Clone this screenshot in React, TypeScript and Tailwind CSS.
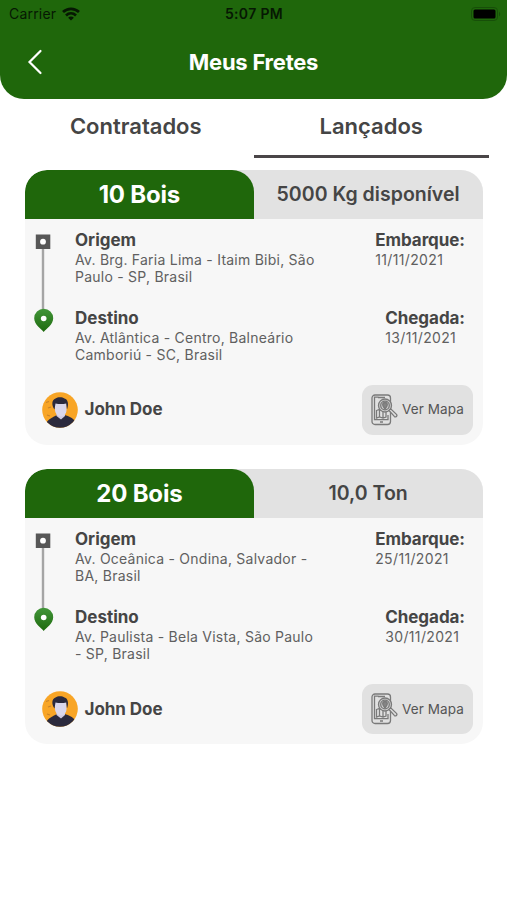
import React, { useState } from 'react';

type Tab = 'contratados' | 'lancados';

interface Freight {
  id: number;
  title: string;
  amount: string;
  origin: string[];
  destination: string[];
  departure: string;
  arrival: string;
  driver: string;
}

const FREIGHTS: Freight[] = [
  {
    id: 1,
    title: '10 Bois',
    amount: '5000 Kg disponível',
    origin: ['Av. Brg. Faria Lima - Itaim Bibi, São', 'Paulo - SP, Brasil'],
    destination: ['Av. Atlântica - Centro, Balneário', 'Camboriú - SC, Brasil'],
    departure: '11/11/2021',
    arrival: '13/11/2021',
    driver: 'John Doe',
  },
  {
    id: 2,
    title: '20 Bois',
    amount: '10,0 Ton',
    origin: ['Av. Oceânica - Ondina, Salvador -', 'BA, Brasil'],
    destination: ['Av. Paulista - Bela Vista, São Paulo', '- SP, Brasil'],
    departure: '25/11/2021',
    arrival: '30/11/2021',
    driver: 'John Doe',
  },
];

const WifiIcon = () => (
  <svg width="18" height="14" viewBox="0 0 18 14" fill="none" stroke="#061803" strokeWidth="2.7">
    <path d="M1 5.1C5.5.8 12.5.8 17 5.1" />
    <path d="M4 8.4c2.9-2.7 7.1-2.7 10 0" />
    <path d="M9 13.6 6.1 10.7c1.6-1.5 4.2-1.5 5.8 0z" fill="#061803" stroke="none" />
  </svg>
);

const BatteryIcon = () => (
  <svg width="30" height="14" viewBox="0 0 30 14">
    <rect x="0.5" y="0.5" width="26" height="13" rx="3.5" fill="none" stroke="#174f09" />
    <rect x="2.5" y="2.5" width="22" height="9" rx="1.5" fill="#000" />
    <path d="M28 4.7c1.6.7 1.6 3.9 0 4.6z" fill="#174f09" />
  </svg>
);

const RouteIcon = () => (
  <svg width="20" height="98" viewBox="0 0 20 98" className="shrink-0">
    <defs>
      <linearGradient id="pin" x1="0" y1="0" x2="0" y2="1">
        <stop offset="0" stopColor="#43963a" />
        <stop offset="1" stopColor="#1d6a0d" />
      </linearGradient>
    </defs>
    <path d="M9 14v64" stroke="#a5a5a5" strokeWidth="2.4" />
    <rect x="1.8" y="0.5" width="14.5" height="14.5" fill="#575757" />
    <circle cx="9" cy="7.7" r="2.9" fill="#fff" />
    <path
      d="M9.700 98C7.500 95 .2 90.800.2 84.200a9.500 9.500 0 0 1 19 0c0 6.600-7.300 10.800-9.500 13.800z"
      fill="url(#pin)"
    />
    <circle cx="9.7" cy="84.5" r="2.8" fill="#fff" />
  </svg>
);

const Avatar = () => (
  <svg width="36" height="36" viewBox="0 0 36 36">
    <clipPath id="face">
      <circle cx="18" cy="18" r="17.8" />
    </clipPath>
    <g clipPath="url(#face)">
      <rect width="36" height="36" fill="#f8a526" />
      <path d="M4 10.500l3-1M6 16l3-1M5 23l3 1" stroke="#c98329" strokeWidth="1.300" />
      <path d="M3 36c0-6 3-8.500 11.500-12.800h9C30 25.500 34 27 35 36z" fill="#2b2a3d" />
      <path d="M14.500 19h8.500v5l-4 3.500-4.500-3.500z" fill="#cfcbe2" />
      <path d="M13 11h11.500v7c0 3.500-2.500 6.500-5.500 6.500s-6-3-6-6.500z" fill="#dad7ec" />
      <path d="M12.500 17.500c-3-4-3-9.500 1-11 2.500-1.800 7-1.500 9 0 3.500.8 4.500 6 2.500 11l-.8-6c-3.200.8-7.200.8-10.700 0z" fill="#2b2a3d" />
    </g>
  </svg>
);

const MapIcon = () => (
  <svg width="27" height="32" viewBox="0 0 27 32" fill="none" stroke="#7a7a7a" strokeWidth="1.300">
    <rect x="1" y="1" width="18.500" height="29.500" rx="3" />
    <path d="M7 3.800V3.200H3.500v22.500H17V21M9 28h3M7 3.500h7" />
    <path d="M5.500 16.500l3-1 3.500 1 3-1v7.500l-3 1-3.500-1-3 1zM8.500 15.500V23M12 16.500V24" />
    <circle cx="14" cy="11.500" r="6.500" fill="#cfcfcf" />
    <circle cx="14" cy="11.500" r="4.300" />
    <path d="M14 15c-1.600-2-2.300-3-2.300-4.200a2.300 2.300 0 0 1 4.600 0C16.300 12 15.600 13 14 15z" fill="#858585" />
    <path d="M18 16.500l1.700-1.600 5.800 5.500c1.200 1.500-.8 3.200-2.200 2z" fill="#ddd" />
  </svg>
);

interface StopProps {
  label: string;
  address: string[];
  dateLabel: string;
  date: string;
}

const Stop: React.FC<StopProps> = ({ label, address, dateLabel, date }) => (
  <div className="flex h-[78px] justify-between">
    <div>
      <h3 className="text-[17px] leading-[21px] font-bold">{label}</h3>
      {address.map((line) => (
        <p key={line} className="text-[14px] leading-[17.600px] tracking-[0.24px] whitespace-nowrap text-[#606060]">{line}</p>
      ))}
    </div>
    <div>
      <h3 className="text-[17px] leading-[21px] font-bold tracking-[-0.05px]">{dateLabel}</h3>
      <p className="text-[14px] leading-[17.600px] tracking-[0.35px] text-[#606060]">{date}</p>
    </div>
  </div>
);

const FreightCard: React.FC<{ freight: Freight }> = ({ freight }) => (
  <article className="h-[275px] overflow-hidden rounded-[22px] bg-[#f7f7f7]">
    <div className="flex h-[49px] bg-[#e2e2e2] text-center">
      <h2 className="w-1/2 rounded-t-[22px] bg-[#1f670b] text-[24px] leading-[49px] font-bold tracking-[-0.2px] text-white">{freight.title}</h2>
      <p className="w-1/2 text-[19.500px] leading-[49px] font-semibold tracking-[0.03px]">{freight.amount}</p>
    </div>

    <div className="flex pt-[11px] pr-[17.500px] pl-[9px]">
      <div className="w-[41px] pt-[4px]">
        <RouteIcon />
      </div>
      <div className="flex-1">
        <Stop label="Origem" address={freight.origin} dateLabel="Embarque:" date={freight.departure} />
        <Stop label="Destino" address={freight.destination} dateLabel="Chegada:" date={freight.arrival} />
      </div>
    </div>

    <div className="flex items-center justify-between pr-[9.500px] pl-[16.500px]">
      <div className="flex items-center gap-[7px]">
        <Avatar />
        <span className="text-[17px] font-bold tracking-[-0.05px]">{freight.driver}</span>
      </div>
      <button className="mt-[-1px] flex h-[50px] w-[111px] items-center gap-[4px] rounded-[11px] bg-[#e1e1e1] pl-[9px]">
        <MapIcon />
        <span className="text-[13.500px] tracking-[0.1px] whitespace-nowrap text-[#555]">Ver Mapa</span>
      </button>
    </div>
  </article>
);

const App: React.FC = () => {
  const [tab, setTab] = useState<Tab>('lancados');

  const tabClass = (name: Tab) =>
    `h-[59px] flex-1 border-b-[3px] pb-px text-[22px] font-semibold ${
      tab === name ? 'border-[#4a4648]' : 'border-transparent'
    }`;

  return (
    <div className="h-[900px] w-[507px] overflow-hidden bg-white font-['Inter','Liberation_Sans',sans-serif] text-[#454545]">
      <header className="h-[98.500px] rounded-b-[24px] bg-[#1f670b]">
        {/* Status bar */}
        <div className="grid h-[27px] grid-cols-3 items-center pr-[6px] pl-[9px] text-[14px] text-[#061803]">
          <div className="flex items-center gap-[6px] tracking-[0.2px]">
            Carrier
            <WifiIcon />
          </div>
          <span className="pr-[2px] text-center font-semibold tracking-[0.35px]">5:07 PM</span>
          <div className="flex justify-end">
            <BatteryIcon />
          </div>
        </div>
        <div className="grid h-[70px] grid-cols-[60px_1fr_60px] items-center">
          <button className="pl-[27px]" aria-label="Voltar">
            <svg width="16" height="26" viewBox="0 0 16 26" fill="none" stroke="#fff" strokeWidth="2.200" strokeLinecap="round">
              <path d="M13.500 2 2.500 13l11 11" />
            </svg>
          </button>
          <h1 className="text-center text-[22px] font-bold tracking-[-0.25px] text-white">Meus Fretes</h1>
        </div>
      </header>

      <nav className="flex px-[18px]">
        <button className={tabClass('contratados')} onClick={() => setTab('contratados')}>Contratados</button>
        <button className={tabClass('lancados')} onClick={() => setTab('lancados')}>Lançados</button>
      </nav>

      <main className="flex flex-col gap-[24.300px] pt-[12px] pr-[24.500px] pl-[25px]">
        {FREIGHTS.map((freight) => (
          <FreightCard key={freight.id} freight={freight} />
        ))}
      </main>
    </div>
  );
};

export default App;
